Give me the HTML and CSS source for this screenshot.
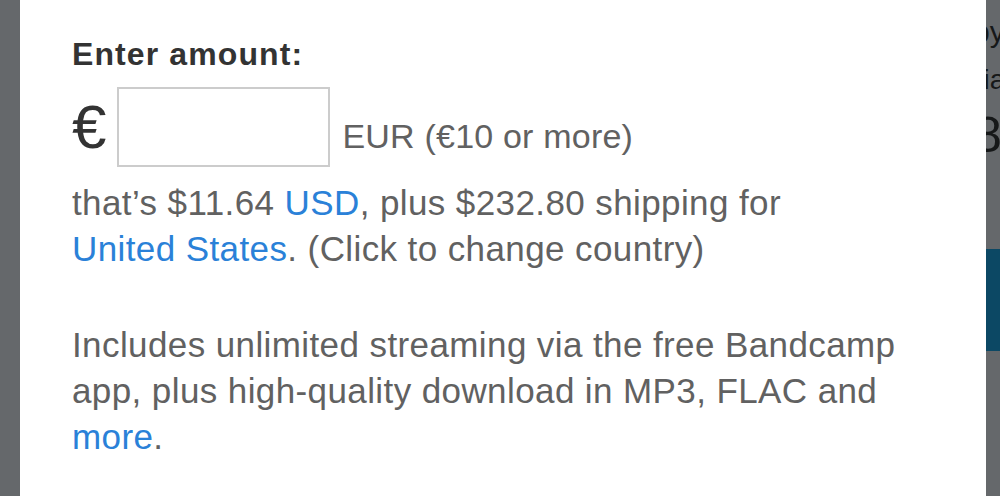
FILE: index.html
```html
<!DOCTYPE html>
<html lang="en">
<head>
<meta charset="utf-8">
<title>Enter amount</title>
<link rel="stylesheet" href="styles.css">
</head>
<body>
<div class="page">
  <div class="gutter"></div>
  <main class="panel">
    <h2 class="label">Enter amount:</h2>
    <div class="amount-row">
      <span class="currency">€</span>
      <input class="amount-input" type="text" aria-label="amount">
      <span class="currency-note">EUR (€10 or more)</span>
    </div>
    <p class="conversion">that’s $11.64 <a class="link" href="#">USD</a>, plus $232.80 shipping for <a class="link country" href="#">United States</a>. (Click to change country)</p>
    <p class="includes">Includes unlimited streaming via the free Bandcamp app, plus high-quality download in MP3, FLAC and <a class="link" href="#">more</a>.</p>
  </main>
  <aside class="behind">
    <div class="behind-line behind-y">by</div>
    <div class="behind-line behind-ia">pia</div>
    <div class="behind-line behind-8">8</div>
    <div class="behind-bar"></div>
  </aside>
</div>
</body>
</html>
```

FILE: styles.css
```css
html, body {
  margin: 0;
  padding: 0;
}

body {
  width: 1000px;
  height: 496px;
  overflow: hidden;
  background: #65686b;
  font-family: "Liberation Sans", Arial, sans-serif;
}

.page {
  display: flex;
  height: 496px;
}

.gutter {
  width: 20px;
  flex: none;
}

.panel {
  width: 966px;
  flex: none;
  box-sizing: border-box;
  background: #ffffff;
  padding: 35px 52px 0 52px;
}

.label {
  margin: 0;
  font-size: 32px;
  line-height: 38px;
  font-weight: 700;
  letter-spacing: 1.1px;
  color: #333333;
}

.amount-row {
  display: flex;
  align-items: flex-end;
  margin-top: 14px;
}

.currency {
  font-size: 62px;
  line-height: 60px;
  color: #333333;
  margin-bottom: 10px;
  margin-right: 11px;
}

.amount-input {
  width: 213px;
  height: 80px;
  box-sizing: border-box;
  border: 2px solid #cccccc;
  border-radius: 0;
  margin: 0;
  padding: 0 8px;
  background: #ffffff;
  font: 34px "Liberation Sans", Arial, sans-serif;
  outline: none;
}

.currency-note {
  font-size: 34px;
  line-height: 34px;
  letter-spacing: 0.2px;
  color: #616161;
  margin-left: 12px;
  margin-bottom: 14px;
}

.conversion,
.includes {
  margin: 0;
  font-size: 35px;
  line-height: 46px;
  letter-spacing: 0.4px;
  color: #616161;
}

.conversion {
  margin-top: 13px;
}

.includes {
  margin-top: 50px;
}

.link {
  color: #2a81d8;
  text-decoration: none;
}

.country {
  white-space: nowrap;
}

.behind {
  flex: 1;
  overflow: hidden;
  display: flex;
  flex-direction: column;
}

.behind-line {
  white-space: nowrap;
  color: #161819;
}

.behind-y {
  font-size: 30px;
  line-height: 30px;
  margin-top: 17px;
  margin-left: -13px;
}

.behind-ia {
  font-size: 28px;
  line-height: 30px;
  margin-top: 18px;
  margin-left: -18px;
}

.behind-8 {
  font-size: 50px;
  line-height: 50px;
  margin-top: 15px;
  margin-left: -12px;
}

.behind-bar {
  height: 102px;
  margin-top: 89px;
  background: #0c4864;
}
```
